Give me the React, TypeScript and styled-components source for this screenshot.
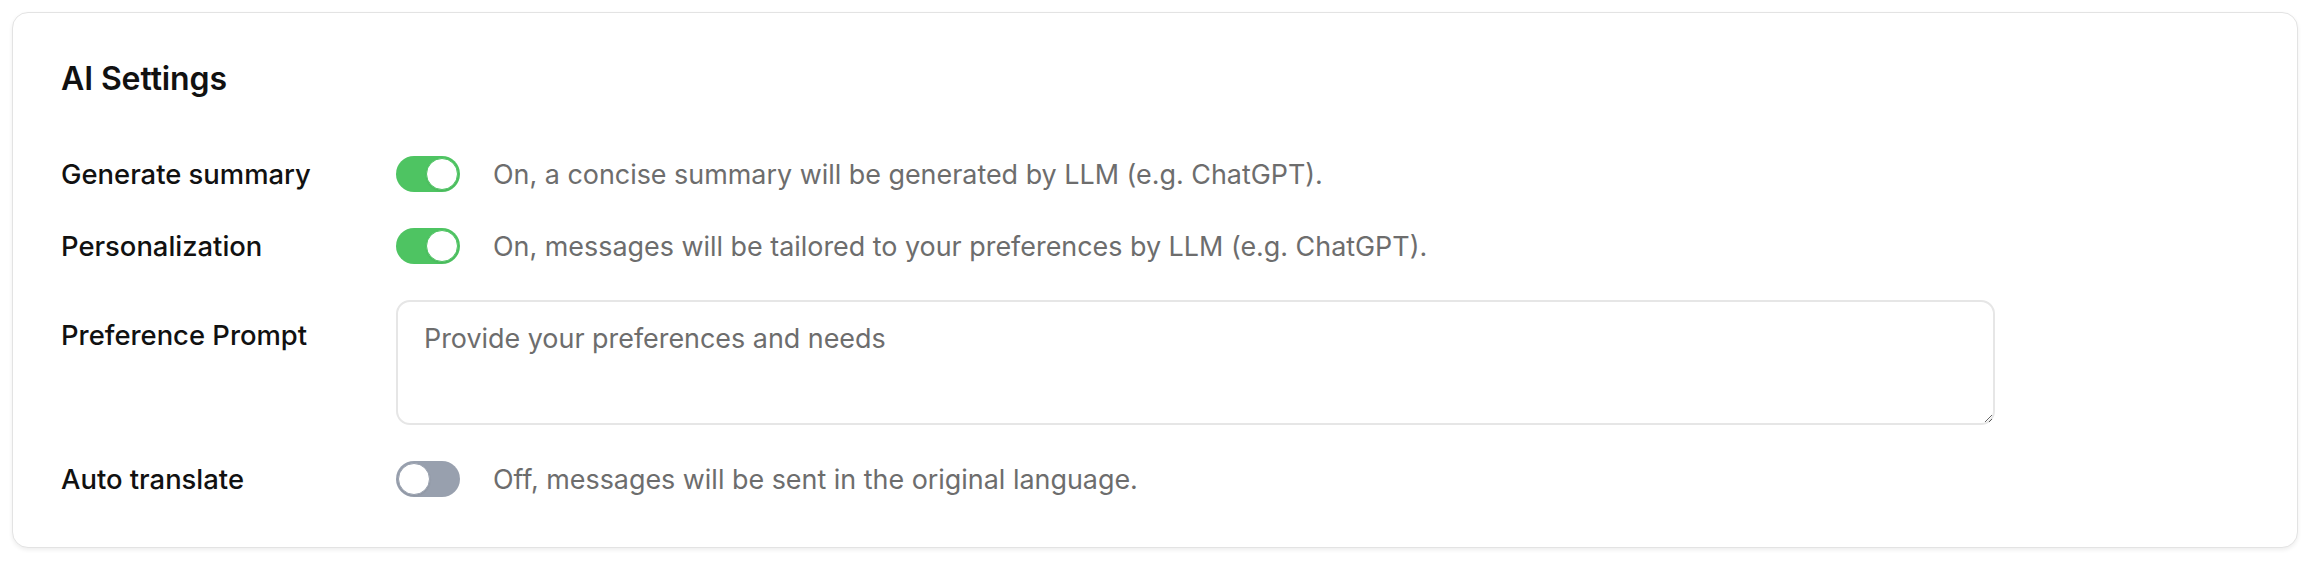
import { FunctionComponent, useState } from 'react';
import styled, { createGlobalStyle } from 'styled-components';

const GlobalStyle = createGlobalStyle`
  body {
    margin: 0;
    background: #ffffff;
    font-family: Inter, 'Noto Sans', sans-serif;
    color: #111111;
  }
`;

const Card = styled.section`
  margin: 12px;
  padding: 48px 48px 50px;
  border: 1px solid #e3e3e3;
  border-radius: 16px;
  background: #ffffff;
  box-shadow: 0 2px 4px rgba(0, 0, 0, 0.07);
`;

const Heading = styled.h2`
  margin: 0 0 59px;
  font-size: 32px;
  line-height: 36px;
  font-weight: 600;
  letter-spacing: -0.1px;
`;

const Rows = styled.div`
  display: grid;
  grid-template-columns: 335px 1fr;
  row-gap: 36px;
  align-items: center;
`;

const Label = styled.div<{ $top?: boolean }>`
  font-size: 27.4px;
  line-height: 36px;
  font-weight: 500;
  align-self: ${(p) => (p.$top ? 'start' : 'center')};
  padding-top: ${(p) => (p.$top ? '17px' : '0')};
`;

const Control = styled.div`
  display: flex;
  align-items: center;
  gap: 33px;
`;

const Hint = styled.span`
  font-size: 26.9px;
  line-height: 36px;
  color: #6d6d6d;
`;

const Track = styled.button<{ $on: boolean }>`
  position: relative;
  flex: none;
  width: 64px;
  height: 36px;
  padding: 0;
  border: none;
  border-radius: 18px;
  cursor: pointer;
  background: ${(p) => (p.$on ? '#4ec462' : '#98a0ae')};
`;

const Knob = styled.span<{ $on: boolean }>`
  position: absolute;
  top: 2px;
  left: ${(p) => (p.$on ? '30px' : '2px')};
  width: 32px;
  height: 32px;
  box-sizing: border-box;
  border-radius: 50%;
  background: #ffffff;
  border: 1px solid ${(p) => (p.$on ? '#4ec462' : '#98a0ae')};
  box-shadow: 0 1px 2px rgba(0, 0, 0, 0.08);
`;

const Prompt = styled.textarea`
  display: block;
  box-sizing: border-box;
  width: 1599px;
  height: 125px;
  padding: 18px 26px;
  border: 2px solid #e6e6e6;
  border-radius: 14px;
  font-family: Inter, 'Noto Sans', sans-serif;
  font-size: 26.9px;
  line-height: 36px;
  color: #111111;
  outline: none;

  &::placeholder {
    color: #6d6d6d;
  }
`;

const Toggle: FunctionComponent<{ on: boolean; onToggle: () => void }> = ({ on, onToggle }) => (
  <Track type="button" role="switch" aria-checked={on} $on={on} onClick={onToggle}>
    <Knob $on={on} />
  </Track>
);

type Setting = 'summary' | 'personalization' | 'translate';

export default function App() {
  const [settings, setSettings] = useState<Record<Setting, boolean>>({
    summary: true,
    personalization: true,
    translate: false,
  });

  const flip = (key: Setting): void => setSettings({ ...settings, [key]: !settings[key] });

  return (
    <>
      <GlobalStyle />
      <Card>
        <Heading>AI Settings</Heading>
        <Rows>
          <Label>Generate summary</Label>
          <Control>
            <Toggle on={settings.summary} onToggle={() => flip('summary')} />
            <Hint>On, a concise summary will be generated by LLM (e.g. ChatGPT).</Hint>
          </Control>

          <Label>Personalization</Label>
          <Control>
            <Toggle on={settings.personalization} onToggle={() => flip('personalization')} />
            <Hint>On, messages will be tailored to your preferences by LLM (e.g. ChatGPT).</Hint>
          </Control>

          <Label $top>Preference Prompt</Label>
          <Prompt placeholder="Provide your preferences and needs" />

          <Label>Auto translate</Label>
          <Control>
            <Toggle on={settings.translate} onToggle={() => flip('translate')} />
            <Hint>
              {settings.translate
                ? 'On, messages will be translated into your language.'
                : 'Off, messages will be sent in the original language.'}
            </Hint>
          </Control>
        </Rows>
      </Card>
    </>
  );
}
